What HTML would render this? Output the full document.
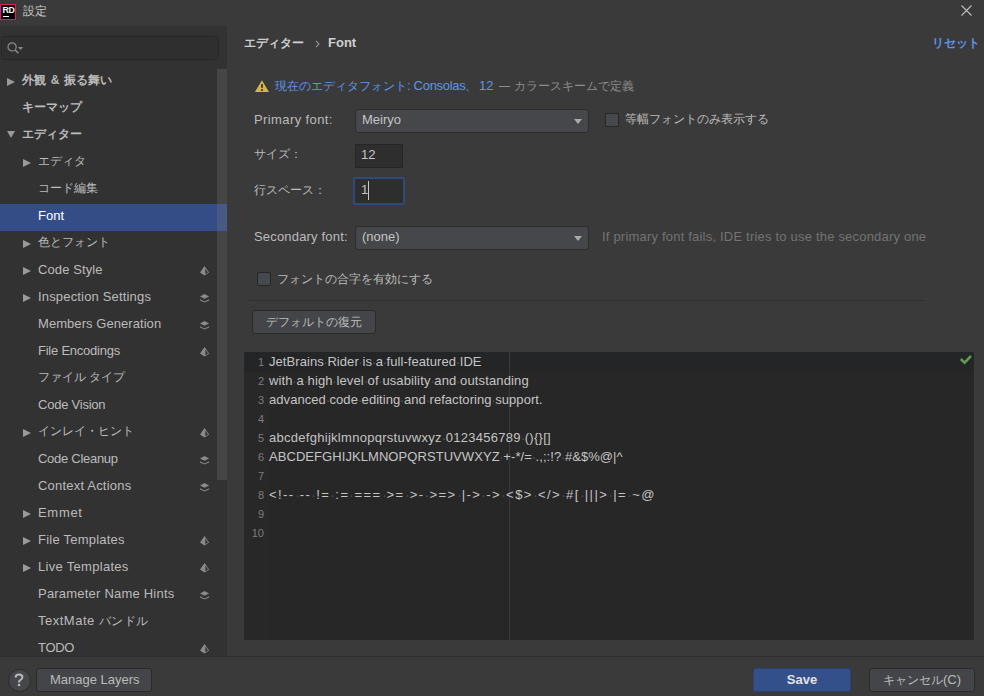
<!DOCTYPE html>
<html><head><meta charset="utf-8">
<style>
*{box-sizing:border-box;margin:0;padding:0}
html,body{width:984px;height:696px;overflow:hidden;background:#3a3a3a;font-family:"Liberation Sans",sans-serif;font-size:13px;color:#bbbbbb;position:relative}
.a{position:absolute;white-space:nowrap}
.j{font-size:12px}
.L{font-size:13px;line-height:15px}
#side{left:0;top:26px;width:227px;height:630px;background:#323232;overflow:hidden}
.row{position:absolute;left:0;width:227px;height:27px}
.row.sel{background:#344d86;color:#fff}
.tri{position:absolute;width:0;height:0;border-left:8.5px solid #9a9a9a;border-top:4.5px solid transparent;border-bottom:4.5px solid transparent;top:9px}
.tri.down{border-left:4.6px solid transparent;border-right:4.6px solid transparent;border-top:7.5px solid #9a9a9a;border-bottom:0;top:8px}
.row .t{position:absolute;top:4px;line-height:15px;white-space:nowrap}
.lay{position:absolute;left:200px;top:9px;width:10px;height:10px}
.btn{position:absolute;border:1px solid #2a2a2a;border-radius:3px;background:#434548}
.combo{position:absolute;border:1px solid #2c2c2c;border-radius:3px;background:#45474a}
.combo .arr{position:absolute;right:6px;top:9px;width:0;height:0;border-left:4.5px solid transparent;border-right:4.5px solid transparent;border-top:5.5px solid #aaa}
.inp{position:absolute;border:1px solid #262626;background:#2e2e2e}
.cb{position:absolute;width:14px;height:14px;border:1px solid #262626;border-radius:2px;background:#45494d}
.code{position:absolute;left:269px;font-size:13px;line-height:15px;color:#c4c4c4;white-space:pre}
.ln{position:absolute;width:22px;text-align:right;left:242px;color:#7d7d7d;font-size:11px;line-height:13px}
.code i{font-style:normal;background:radial-gradient(circle at 50% 62%,#464646 0.8px,transparent 1.1px)}
</style></head><body>
<!-- app icon -->
<div class="a" style="left:0;top:4px;width:16px;height:16px;background:#000;border:1px solid #e3176b"></div>
<div class="a" style="left:2.5px;top:6px;color:#fff;font-size:8.8px;line-height:9px;font-weight:bold;letter-spacing:-0.4px">RD</div>
<div class="a" style="left:3px;top:16px;width:6px;height:1px;background:#fff"></div>
<div class="a j" style="left:23px;top:3px;line-height:16px;color:#c8c8c8">設定</div>
<svg class="a" style="left:961px;top:5px" width="11" height="11" viewBox="0 0 11 11"><path d="M0.5 0.5L10.5 10.5M10.5 0.5L0.5 10.5" stroke="#bdbdbd" stroke-width="1.1"/></svg>

<div class="a" id="side">
<div class="a" style="left:1px;top:10px;width:218px;height:24px;border:1px solid #272727;border-radius:4px;background:#2f2f2f"></div>
<svg class="a" style="left:6px;top:15px" width="18" height="14" viewBox="0 0 18 14"><circle cx="6.1" cy="5.9" r="4.1" fill="none" stroke="#8a8a8a" stroke-width="1.2"/><path d="M9 8.9L12.4 12.3" stroke="#8a8a8a" stroke-width="1.5"/><path d="M12 6L17 6L14.5 9Z" fill="#8a8a8a"/></svg>
<div class="row" style="top:43px"><div class="tri" style="left:7px"></div><span class="t j" style="left:22px;letter-spacing:0px;font-weight:bold">外観<span style="word-spacing:1.5px"> &amp; </span>振る舞い</span></div>
<div class="row" style="top:70px"><span class="t j" style="left:22px;letter-spacing:0px;font-weight:bold">キーマップ</span></div>
<div class="row" style="top:97px"><div class="tri down" style="left:6.5px"></div><span class="t j" style="left:22px;letter-spacing:0px;font-weight:bold">エディター</span></div>
<div class="row" style="top:124px"><div class="tri" style="left:23px"></div><span class="t j" style="left:38px;letter-spacing:0px">エディタ</span></div>
<div class="row" style="top:151px"><span class="t j" style="left:38px;letter-spacing:0px">コード編集</span></div>
<div class="row sel" style="top:178px"><span class="t" style="left:38px;letter-spacing:0px">Font</span></div>
<div class="row" style="top:205px"><div class="tri" style="left:23px"></div><span class="t j" style="left:38px;letter-spacing:0px">色とフォント</span></div>
<div class="row" style="top:232px"><div class="tri" style="left:23px"></div><span class="t" style="left:38px;letter-spacing:0.1px">Code Style</span><svg class="lay" style="top:7px;height:12px" viewBox="0 0 10 12"><path d="M4.5 1L9.1 7.5L4.5 10.4L0 7.5Z" fill="#8a8a8a"/><path d="M5.3 3.6L8 7.5L5.3 9Z" fill="#323232"/></svg></div>
<div class="row" style="top:259px"><div class="tri" style="left:23px"></div><span class="t" style="left:38px;letter-spacing:0.17px">Inspection Settings</span><svg class="lay" style="top:0;height:12px;top:7px" viewBox="0 0 10 12"><path d="M4.5 1.9L9.1 4.5L4.5 6.8L0 4.5Z" fill="#8a8a8a"/><path d="M0 7.2L4.5 9.4L9.1 7.2L9.1 8.5L4.5 10.6L0 8.5Z" fill="#8a8a8a"/></svg></div>
<div class="row" style="top:286px"><span class="t" style="left:38px;letter-spacing:0.06px">Members Generation</span><svg class="lay" style="top:0;height:12px;top:7px" viewBox="0 0 10 12"><path d="M4.5 1.9L9.1 4.5L4.5 6.8L0 4.5Z" fill="#8a8a8a"/><path d="M0 7.2L4.5 9.4L9.1 7.2L9.1 8.5L4.5 10.6L0 8.5Z" fill="#8a8a8a"/></svg></div>
<div class="row" style="top:313px"><span class="t" style="left:38px;letter-spacing:-0.23px">File Encodings</span><svg class="lay" style="top:7px;height:12px" viewBox="0 0 10 12"><path d="M4.5 1L9.1 7.5L4.5 10.4L0 7.5Z" fill="#8a8a8a"/><path d="M5.3 3.6L8 7.5L5.3 9Z" fill="#323232"/></svg></div>
<div class="row" style="top:340px"><span class="t j" style="left:38px;letter-spacing:0px">ファイル タイプ</span></div>
<div class="row" style="top:367px"><span class="t" style="left:38px;letter-spacing:-0.23px">Code Vision</span></div>
<div class="row" style="top:394px"><div class="tri" style="left:23px"></div><span class="t j" style="left:38px;letter-spacing:0px">インレイ・ヒント</span><svg class="lay" style="top:7px;height:12px" viewBox="0 0 10 12"><path d="M4.5 1L9.1 7.5L4.5 10.4L0 7.5Z" fill="#8a8a8a"/><path d="M5.3 3.6L8 7.5L5.3 9Z" fill="#323232"/></svg></div>
<div class="row" style="top:421px"><span class="t" style="left:38px;letter-spacing:-0.28px">Code Cleanup</span><svg class="lay" style="top:0;height:12px;top:7px" viewBox="0 0 10 12"><path d="M4.5 1.9L9.1 4.5L4.5 6.8L0 4.5Z" fill="#8a8a8a"/><path d="M0 7.2L4.5 9.4L9.1 7.2L9.1 8.5L4.5 10.6L0 8.5Z" fill="#8a8a8a"/></svg></div>
<div class="row" style="top:448px"><span class="t" style="left:38px;letter-spacing:0.2px">Context Actions</span><svg class="lay" style="top:0;height:12px;top:7px" viewBox="0 0 10 12"><path d="M4.5 1.9L9.1 4.5L4.5 6.8L0 4.5Z" fill="#8a8a8a"/><path d="M0 7.2L4.5 9.4L9.1 7.2L9.1 8.5L4.5 10.6L0 8.5Z" fill="#8a8a8a"/></svg></div>
<div class="row" style="top:475px"><div class="tri" style="left:23px"></div><span class="t" style="left:38px;letter-spacing:0.7px">Emmet</span></div>
<div class="row" style="top:502px"><div class="tri" style="left:23px"></div><span class="t" style="left:38px;letter-spacing:0.23px">File Templates</span><svg class="lay" style="top:7px;height:12px" viewBox="0 0 10 12"><path d="M4.5 1L9.1 7.5L4.5 10.4L0 7.5Z" fill="#8a8a8a"/><path d="M5.3 3.6L8 7.5L5.3 9Z" fill="#323232"/></svg></div>
<div class="row" style="top:529px"><div class="tri" style="left:23px"></div><span class="t" style="left:38px;letter-spacing:0.3px">Live Templates</span><svg class="lay" style="top:7px;height:12px" viewBox="0 0 10 12"><path d="M4.5 1L9.1 7.5L4.5 10.4L0 7.5Z" fill="#8a8a8a"/><path d="M5.3 3.6L8 7.5L5.3 9Z" fill="#323232"/></svg></div>
<div class="row" style="top:556px"><span class="t" style="left:38px;letter-spacing:0.21px">Parameter Name Hints</span><svg class="lay" style="top:0;height:12px;top:7px" viewBox="0 0 10 12"><path d="M4.5 1.9L9.1 4.5L4.5 6.8L0 4.5Z" fill="#8a8a8a"/><path d="M0 7.2L4.5 9.4L9.1 7.2L9.1 8.5L4.5 10.6L0 8.5Z" fill="#8a8a8a"/></svg></div>
<div class="row" style="top:583px"><span class="t" style="left:38px;letter-spacing:0.5px">TextMate <span class=j>バンドル</span></span></div>
<div class="row" style="top:610px"><span class="t" style="left:38px;letter-spacing:-0.3px">TODO</span><svg class="lay" style="top:7px;height:12px" viewBox="0 0 10 12"><path d="M4.5 1L9.1 7.5L4.5 10.4L0 7.5Z" fill="#8a8a8a"/><path d="M5.3 3.6L8 7.5L5.3 9Z" fill="#323232"/></svg></div>
<div class="a" style="left:217px;top:43px;width:10px;height:411px;background:rgba(120,120,130,0.3)"></div>
</div>

<!-- right panel -->
<div class="a j" style="left:244px;top:35px;line-height:16px;font-weight:bold;color:#cfcfcf">エディター</div>
<svg class="a" style="left:314px;top:39px" width="8" height="10" viewBox="0 0 8 10"><path d="M2 1.8L5 5L2 8.2" fill="none" stroke="#959595" stroke-width="1.1"/></svg>
<div class="a L" style="left:328px;top:35px;font-weight:bold;color:#cfcfcf">Font</div>
<div class="a j" style="left:932px;top:35px;line-height:16px;font-weight:bold;color:#5f95e8">リセット</div>

<svg class="a" style="left:254px;top:80px" width="16" height="13" viewBox="0 0 16 13"><path d="M7.9 0.2L15 12.1L0.9 12.1Z" fill="#d3b54c"/><rect x="7.1" y="4.1" width="1.7" height="3.7" fill="#2e2e36"/><rect x="7.1" y="9.1" width="1.7" height="1.9" fill="#2e2e36"/></svg>
<div class="a" style="left:275px;top:78px;line-height:16px;color:#5f95e8"><span class="j">現在のエディタフォント</span><span style="letter-spacing:-0.3px">: Consolas</span><span class="j">、</span><span style="margin-left:1.5px">12</span></div>
<div class="a" style="left:499px;top:86px;width:11px;height:1px;background:#8c8c8c"></div>
<div class="a j" style="left:514px;top:78px;line-height:16px;color:#8c8c8c">カラースキームで定義</div>

<div class="a L" style="left:254px;top:112px;letter-spacing:0.4px">Primary font:</div>
<div class="combo" style="left:355px;top:109px;width:234px;height:24px"><div class="arr"></div></div>
<div class="a L" style="left:362px;top:112px;color:#c4c4c4">Meiryo</div>
<div class="cb" style="left:605px;top:113px"></div>
<div class="a j" style="left:625px;top:111px;line-height:16px">等幅フォントのみ表示する</div>

<div class="a j" style="left:254px;top:146px;line-height:16px">サイズ：</div>
<div class="inp" style="left:355px;top:144px;width:48px;height:24px"></div>
<div class="a L" style="left:361px;top:147px;color:#c4c4c4">12</div>

<div class="a j" style="left:254px;top:181.5px;line-height:16px">行スペース：</div>
<div class="a" style="left:353px;top:177px;width:52px;height:28px;border:2px solid #30497c;border-radius:2px;background:#2e2e2e"></div>
<div class="a L" style="left:361px;top:182px;color:#c4c4c4">1</div>
<div class="a" style="left:368px;top:181px;width:1px;height:19px;background:#c8c8c8"></div>

<div class="a L" style="left:254px;top:229px;letter-spacing:0.18px">Secondary font:</div>
<div class="combo" style="left:355px;top:226px;width:234px;height:24px"><div class="arr"></div></div>
<div class="a L" style="left:362px;top:229px;color:#c4c4c4">(none)</div>
<div class="a L" style="left:602px;top:229px;color:#737373;letter-spacing:0.2px">If primary font fails, IDE tries to use the secondary one</div>

<div class="cb" style="left:257px;top:272px"></div>
<div class="a j" style="left:277px;top:271px;line-height:16px">フォントの合字を有効にする</div>

<div class="a" style="left:249px;top:300px;width:676px;height:1px;background:#2e2e2e"></div>
<div class="btn" style="left:252px;top:310px;width:124px;height:24px"></div>
<div class="a j" style="left:266px;top:314px;line-height:16px">デフォルトの復元</div>

<!-- editor -->
<div class="a" style="left:244px;top:352px;width:730px;height:288px;background:#272727"></div>
<div class="a" style="left:244px;top:352px;width:25px;height:288px;background:#282828"></div>
<div class="a" style="left:245px;top:352px;width:729px;height:20px;background:#232526"></div>
<div class="a" style="left:509px;top:352px;width:1px;height:288px;background:#3a3a3a"></div>
<svg class="a" style="left:959px;top:354px" width="13" height="11" viewBox="0 0 13 11"><path d="M1.8 5L5.6 8.6L12 2" fill="none" stroke="#5f9b50" stroke-width="2.6"/></svg>
<div class="ln" style="top:356px">1</div>
<div class="code" style="top:354px;letter-spacing:0.06px">JetBrains<i> </i>Rider<i> </i>is<i> </i>a<i> </i>full-featured<i> </i>IDE</div>
<div class="ln" style="top:375px">2</div>
<div class="code" style="top:373px;letter-spacing:0.13px">with<i> </i>a<i> </i>high<i> </i>level<i> </i>of<i> </i>usability<i> </i>and<i> </i>outstanding</div>
<div class="ln" style="top:394px">3</div>
<div class="code" style="top:392px;letter-spacing:0.056px">advanced<i> </i>code<i> </i>editing<i> </i>and<i> </i>refactoring<i> </i>support.</div>
<div class="ln" style="top:413px">4</div>
<div class="ln" style="top:432px">5</div>
<div class="code" style="top:430px;letter-spacing:0.28px">abcdefghijklmnopqrstuvwxyz<i> </i>0123456789<i> </i>(){}[]</div>
<div class="ln" style="top:451px">6</div>
<div class="code" style="top:449px;letter-spacing:0.064px">ABCDEFGHIJKLMNOPQRSTUVWXYZ<i> </i>+-*/=<i> </i>.,;:!?<i> </i>#&amp;$%@|^</div>
<div class="ln" style="top:470px">7</div>
<div class="ln" style="top:489px">8</div>
<div class="code" style="top:487px;letter-spacing:1.43px">&lt;!--<i> </i>--<i> </i>!=<i> </i>:=<i> </i>===<i> </i>&gt;=<i> </i>&gt;-<i> </i>&gt;=&gt;<i> </i>|-&gt;<i> </i>-&gt;<i> </i>&lt;$&gt;<i> </i>&lt;/&gt;<i> </i>#[<i> </i>|||&gt;<i> </i>|=<i> </i>~@</div>
<div class="ln" style="top:508px">9</div>
<div class="ln" style="top:527px">10</div>

<!-- bottom -->
<div class="a" style="left:0;top:656px;width:984px;height:1px;background:#2e2e2e"></div>
<svg class="a" style="left:8px;top:669px" width="24" height="24" viewBox="0 0 24 24"><circle cx="11.6" cy="11.4" r="11" fill="#45474a" stroke="#2a2a2a" stroke-width="1"/><path d="M7.6 8.4Q7.6 5.6 11 5.6Q14.4 5.6 14.4 8.3Q14.4 10.2 12.3 11.2Q11 11.9 11 13.6" fill="none" stroke="#b9b9b9" stroke-width="2"/><rect x="9.9" y="14.9" width="2.3" height="2.2" fill="#b9b9b9"/></svg>
<div class="btn" style="left:36px;top:668px;width:116px;height:24px"></div>
<div class="a L" style="left:50px;top:672px">Manage Layers</div>
<div class="btn" style="left:753px;top:668px;width:98px;height:24px;background:#34508b;border-color:#2b416e"></div>
<div class="a L" style="left:753px;top:672px;width:98px;text-align:center;font-weight:bold;color:#e2e2e2">Save</div>
<div class="btn" style="left:869px;top:668px;width:106px;height:24px"></div>
<div class="a" style="left:869px;top:672px;width:106px;text-align:center;line-height:15px"><span class="j">キャンセル</span>(C)</div>
</body></html>
